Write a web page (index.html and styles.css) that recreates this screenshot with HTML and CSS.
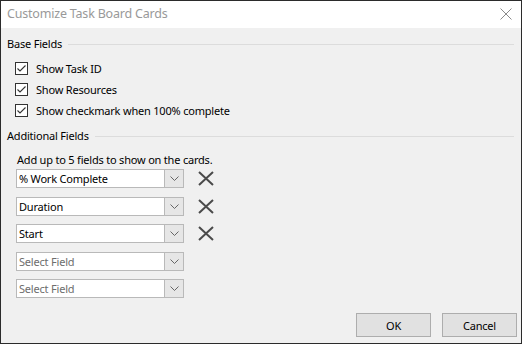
FILE: index.html
```html
<!DOCTYPE html>
<html lang="en">
<head>
    <meta charset="UTF-8">
    <title>Customize Task Board Cards</title>
    <link rel="stylesheet" href="styles.css">
</head>
<body>
    <div class="dialog">
        <div class="titlebar">
            <span class="title">Customize Task Board Cards</span>
            <svg class="close" width="12" height="12" viewBox="0 0 12 12">
                <path d="M0.5 0.5 L11.5 11.5 M11.5 0.5 L0.5 11.5" stroke="#8a8a8a" stroke-width="1" fill="none"/>
            </svg>
        </div>

        <div class="content">
            <div class="group-header">
                <span>Base Fields</span>
                <div class="rule"></div>
            </div>
            <div class="checks">
                <div class="check-row">
                    <span class="box"><svg width="11" height="11" viewBox="0 0 11 11"><path d="M1.5 5.5 L4 8 L9.5 2.5" stroke="#333" stroke-width="1.1" fill="none"/></svg></span>
                    <span>Show Task ID</span>
                </div>
                <div class="check-row">
                    <span class="box"><svg width="11" height="11" viewBox="0 0 11 11"><path d="M1.5 5.5 L4 8 L9.5 2.5" stroke="#333" stroke-width="1.1" fill="none"/></svg></span>
                    <span>Show Resources</span>
                </div>
                <div class="check-row">
                    <span class="box"><svg width="11" height="11" viewBox="0 0 11 11"><path d="M1.5 5.5 L4 8 L9.5 2.5" stroke="#333" stroke-width="1.1" fill="none"/></svg></span>
                    <span>Show checkmark when 100% complete</span>
                </div>
            </div>

            <div class="group-header additional">
                <span>Additional Fields</span>
                <div class="rule"></div>
            </div>
            <p class="hint">Add up to 5 fields to show on the cards.</p>

            <div class="fields">
                <div class="field-row">
                    <div class="combo"><span class="combo-text">% Work Complete</span><span class="combo-btn"><svg width="9" height="5" viewBox="0 0 9 5"><path d="M0.5 0.5 L4.5 4.5 L8.5 0.5" stroke="#666" fill="none"/></svg></span></div>
                    <svg class="remove" width="16" height="15" viewBox="0 0 16 15"><path d="M1 1 L15 14 M15 1 L1 14" stroke="#4a4a4a" stroke-width="2" fill="none"/></svg>
                </div>
                <div class="field-row">
                    <div class="combo"><span class="combo-text">Duration</span><span class="combo-btn"><svg width="9" height="5" viewBox="0 0 9 5"><path d="M0.5 0.5 L4.5 4.5 L8.5 0.5" stroke="#666" fill="none"/></svg></span></div>
                    <svg class="remove" width="16" height="15" viewBox="0 0 16 15"><path d="M1 1 L15 14 M15 1 L1 14" stroke="#4a4a4a" stroke-width="2" fill="none"/></svg>
                </div>
                <div class="field-row">
                    <div class="combo"><span class="combo-text">Start</span><span class="combo-btn"><svg width="9" height="5" viewBox="0 0 9 5"><path d="M0.5 0.5 L4.5 4.5 L8.5 0.5" stroke="#666" fill="none"/></svg></span></div>
                    <svg class="remove" width="16" height="15" viewBox="0 0 16 15"><path d="M1 1 L15 14 M15 1 L1 14" stroke="#4a4a4a" stroke-width="2" fill="none"/></svg>
                </div>
                <div class="field-row">
                    <div class="combo empty"><span class="combo-text">Select Field</span><span class="combo-btn"><svg width="9" height="5" viewBox="0 0 9 5"><path d="M0.5 0.5 L4.5 4.5 L8.5 0.5" stroke="#666" fill="none"/></svg></span></div>
                </div>
                <div class="field-row">
                    <div class="combo empty"><span class="combo-text">Select Field</span><span class="combo-btn"><svg width="9" height="5" viewBox="0 0 9 5"><path d="M0.5 0.5 L4.5 4.5 L8.5 0.5" stroke="#666" fill="none"/></svg></span></div>
                </div>
            </div>
        </div>

        <div class="footer">
            <button class="btn">OK</button>
            <button class="btn">Cancel</button>
        </div>
    </div>
</body>
</html>
```

FILE: styles.css
```css
body {
    margin: 0;
    font-family: "Noto Sans", "Open Sans", sans-serif;
    font-size: 11px;
    letter-spacing: -0.2px;
    color: #000;
}

.dialog {
    width: 522px;
    height: 344px;
    box-sizing: border-box;
    border: 1px solid #2b2b2b;
    background-color: #f0f0f0;
    display: flex;
    flex-direction: column;
}

.titlebar {
    height: 27px;
    background-color: #fff;
    display: flex;
    align-items: center;
    justify-content: space-between;
    padding: 0 9px 0 6px;
}

.title {
    font-size: 12.5px;
    letter-spacing: -0.2px;
    color: #999;
    margin-top: -2px;
}

.close {
    margin-top: -2px;
}

.content {
    flex: 1;
    padding: 8px 6px 0 6px;
}

.group-header {
    display: flex;
    align-items: center;
    height: 16px;
    line-height: 16px;
}

.group-header .rule {
    flex: 1;
    height: 1px;
    background-color: #dcdcdc;
    margin: 0 1px 0 6px;
}

.checks {
    margin: 6px 0 0 8px;
}

.check-row {
    display: flex;
    align-items: center;
    height: 21px;
}

.box {
    width: 11px;
    height: 11px;
    border: 1px solid #333;
    background-color: #fff;
    margin-right: 8px;
    display: flex;
}

.additional {
    margin-top: 7px;
}

.hint {
    margin: 8px 0 0 10px;
    line-height: 16px;
}

.fields {
    margin: 1px 0 0 9px;
    display: flex;
    flex-direction: column;
    gap: 8.5px;
}

.field-row {
    display: flex;
    align-items: center;
    height: 19px;
}

.combo {
    width: 168px;
    height: 19px;
    box-sizing: border-box;
    border: 1px solid #b9b9b9;
    background-color: #fff;
    display: flex;
}

.combo-text {
    flex: 1;
    padding-left: 2px;
    line-height: 17px;
}

.combo.empty .combo-text {
    color: #6d6d6d;
}

.combo-btn {
    width: 18px;
    margin: -1px -1px -1px 0;
    border: 1px solid #b9b9b9;
    background-color: #e6e6e6;
    display: flex;
    align-items: center;
    justify-content: center;
}

.remove {
    margin-left: 14px;
}

.footer {
    display: flex;
    justify-content: flex-end;
    gap: 11px;
    padding: 0 4px 6px 0;
}

.btn {
    width: 75px;
    height: 24px;
    font-family: inherit;
    font-size: 11px;
    letter-spacing: -0.2px;
    background-color: #e1e1e1;
    border: 1px solid #adadad;
    padding: 0;
}
```
